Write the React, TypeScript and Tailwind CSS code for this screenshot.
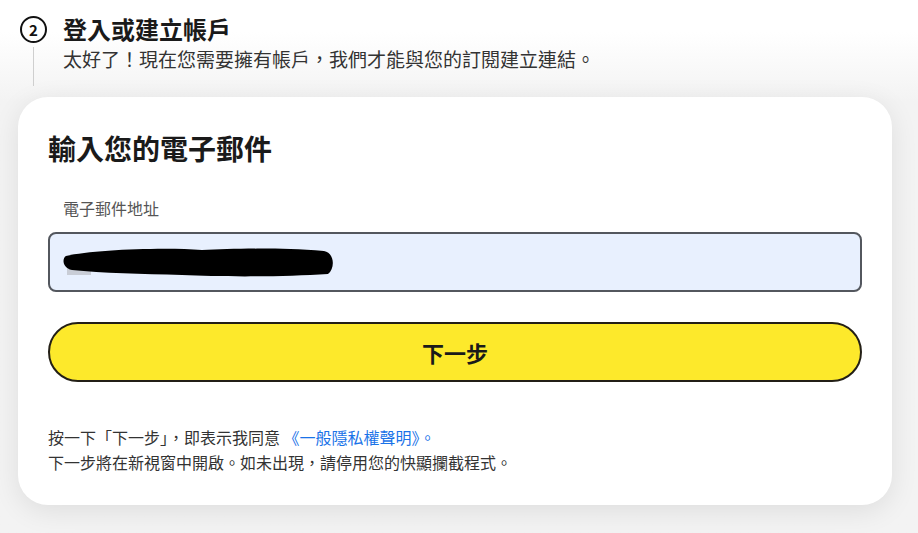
export default function App() {
  return (
    <div
      className="h-[533px] w-full overflow-hidden bg-gradient-to-b from-white from-[6%] to-[#f3f3f3] to-[19%] text-[#222]"
      style={{ fontFamily: '"Noto Sans CJK TC", "Noto Sans", sans-serif' }}
    >
      {/* 步驟標題 */}
      <div className="flex pl-[20px] pt-[16px]">
        <div className="flex w-[27px] flex-col items-center">
          <div className="flex h-[27px] w-[27px] items-center justify-center rounded-full border-[2.5px] border-[#111] text-[15px] font-bold leading-none text-[#111]">
            2
          </div>
          <div className="mt-[4px] h-[39px] w-px bg-[#cfcfcf]" />
        </div>
        <div className="ml-[16px]">
          <p className="text-[24px] font-bold leading-[26px] text-[#1a1a1a]">登入或建立帳戶</p>
          <p className="mt-[4px] text-[19px] leading-[26px] text-[#333]">
            太好了！現在您需要擁有帳戶，我們才能與您的訂閱建立連結。
          </p>
        </div>
      </div>

      {/* 卡片 */}
      <div className="ml-[18px] mr-[26px] mt-[11px] rounded-[30px] bg-white px-[30px] pb-[30px] pt-[31px] shadow-[0_6px_28px_rgba(0,0,0,0.09)]">
        <h1 className="text-[28px] font-bold leading-[40px] text-[#1a1a1a]">輸入您的電子郵件</h1>
        <p className="mt-[28px] pl-[15px] text-[16px] leading-[24px] text-[#555]">電子郵件地址</p>
        <div className="mt-[12px] flex h-[60px] items-center rounded-[8px] border-2 border-[#53575e] bg-[#e8f0fe] pl-[12px]">
          <svg width="274" height="32" viewBox="0 0 274 32">
            <rect x="5" y="17" width="24" height="12" fill="#c9cdd6" />
            <path
              d="M4 10 C 30 4, 100 1, 140 4 C 170 3, 210 1, 262 5 C 273 7, 273 23, 266 28 C 220 31, 160 31, 120 29 C 80 28, 40 27, 10 24 C 0 22, 0 12, 4 10 Z"
              fill="#000"
            />
          </svg>
        </div>
        <button className="mt-[30px] flex h-[60px] w-full items-center justify-center rounded-full border-2 border-[#231f16] bg-[#fde92b] text-[22px] font-bold text-[#1a1a1a]">
          下一步
        </button>
        <div className="mt-[43px] text-[16px] leading-[25px] text-[#333]">
          <p>
            按一下「下一步」，即表示我同意 <span className="text-[#1a73e8]">《一般隱私權聲明》。</span>
          </p>
          <p>下一步將在新視窗中開啟。如未出現，請停用您的快顯攔截程式。</p>
        </div>
      </div>
    </div>
  );
}
